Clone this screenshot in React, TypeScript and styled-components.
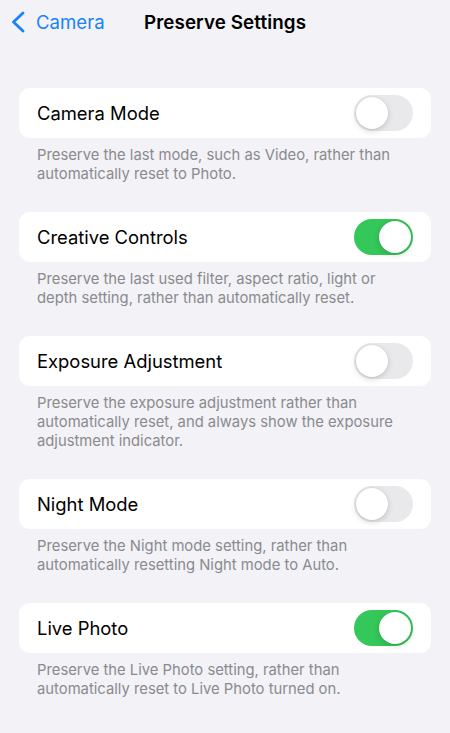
import React, { FC, useState } from 'react';
import styled, { createGlobalStyle } from 'styled-components';

const GlobalStyle = createGlobalStyle`
  html, body {
    margin: 0;
    padding: 0;
    background: #f2f2f7;
  }
  body {
    font-family: Inter, 'Noto Sans', 'Liberation Sans', sans-serif;
    -webkit-font-smoothing: antialiased;
  }
`;

const Page = styled.div`
  min-height: 733px;
  background: #f2f2f7;
`;

const NavBar = styled.header`
  display: grid;
  grid-template-columns: 1fr auto 1fr;
  align-items: center;
  height: 44px;
  padding: 0 11px;
`;

const BackButton = styled.button`
  display: flex;
  align-items: center;
  gap: 11px;
  justify-self: start;
  padding: 0;
  border: none;
  background: none;
  color: #1a82fb;
  font: inherit;
  font-size: 18.6px;
  cursor: pointer;
`;

const Title = styled.h1`
  margin: 0;
  font-size: 18.8px;
  font-weight: 600;
  color: #000;
  letter-spacing: 0.1px;
`;

const List = styled.main`
  display: flex;
  flex-direction: column;
  gap: 28px;
  padding: 44px 19px 0;
`;

const Section = styled.section`
  display: flex;
  flex-direction: column;
`;

const Card = styled.div`
  display: flex;
  align-items: center;
  justify-content: space-between;
  height: 50px;
  padding: 0 18px;
  border-radius: 11px;
  background: #fff;
`;

const Label = styled.span`
  font-size: 18.4px;
  color: #000;
`;

const Footer = styled.p`
  margin: 0;
  padding: 8px 18px 0;
  font-size: 14.8px;
  line-height: 19px;
  color: #8a8a8e;
`;

const Track = styled.button<{ $on: boolean }>`
  position: relative;
  width: 59px;
  height: 36px;
  padding: 0;
  border: none;
  border-radius: 18px;
  background: ${({ $on }) => ($on ? '#34c759' : '#e9e9eb')};
  cursor: pointer;
  transition: background 200ms ease;
`;

const Knob = styled.span<{ $on: boolean }>`
  position: absolute;
  top: 2px;
  left: ${({ $on }) => ($on ? '25px' : '2px')};
  width: 32px;
  height: 32px;
  border-radius: 50%;
  background: #fff;
  box-shadow: 0 2px 6px rgba(0, 0, 0, 0.16), 0 0 0 0.5px rgba(0, 0, 0, 0.06);
  transition: left 200ms ease;
`;

const Toggle: FC<{ on: boolean; onChange: () => void }> = ({ on, onChange }) => (
  <Track $on={on} onClick={onChange} role='switch' aria-checked={on}>
    <Knob $on={on} />
  </Track>
);

const Chevron = () => (
  <svg width='14' height='22' viewBox='0 0 14 22' fill='none'>
    <path
      d='M12 2 L2.5 11 L12 20'
      stroke='#1a82fb'
      strokeWidth='2.8'
      strokeLinecap='round'
      strokeLinejoin='round'
    />
  </svg>
);

const settings = [
  {
    key: 'cameraMode',
    label: 'Camera Mode',
    note: 'Preserve the last mode, such as Video, rather than automatically reset to Photo.',
    on: false,
  },
  {
    key: 'creativeControls',
    label: 'Creative Controls',
    note: 'Preserve the last used filter, aspect ratio, light or depth setting, rather than automatically reset.',
    on: true,
  },
  {
    key: 'exposure',
    label: 'Exposure Adjustment',
    note: 'Preserve the exposure adjustment rather than automatically reset, and always show the exposure adjustment indicator.',
    on: false,
  },
  {
    key: 'nightMode',
    label: 'Night Mode',
    note: 'Preserve the Night mode setting, rather than automatically resetting Night mode to Auto.',
    on: false,
  },
  {
    key: 'livePhoto',
    label: 'Live Photo',
    note: 'Preserve the Live Photo setting, rather than automatically reset to Live Photo turned on.',
    on: true,
  },
];

const App: FC = () => {
  const [values, setValues] = useState<Record<string, boolean>>(() =>
    Object.fromEntries(settings.map((s) => [s.key, s.on]))
  );

  const flip = (key: string) =>
    setValues((prev) => ({ ...prev, [key]: !prev[key] }));

  return (
    <Page>
      <GlobalStyle />
      <NavBar>
        <BackButton>
          <Chevron />
          Camera
        </BackButton>
        <Title>Preserve Settings</Title>
        <span />
      </NavBar>
      <List>
        {settings.map((s) => (
          <Section key={s.key}>
            <Card>
              <Label>{s.label}</Label>
              <Toggle on={values[s.key]} onChange={() => flip(s.key)} />
            </Card>
            <Footer>{s.note}</Footer>
          </Section>
        ))}
      </List>
    </Page>
  );
};

export default App;
